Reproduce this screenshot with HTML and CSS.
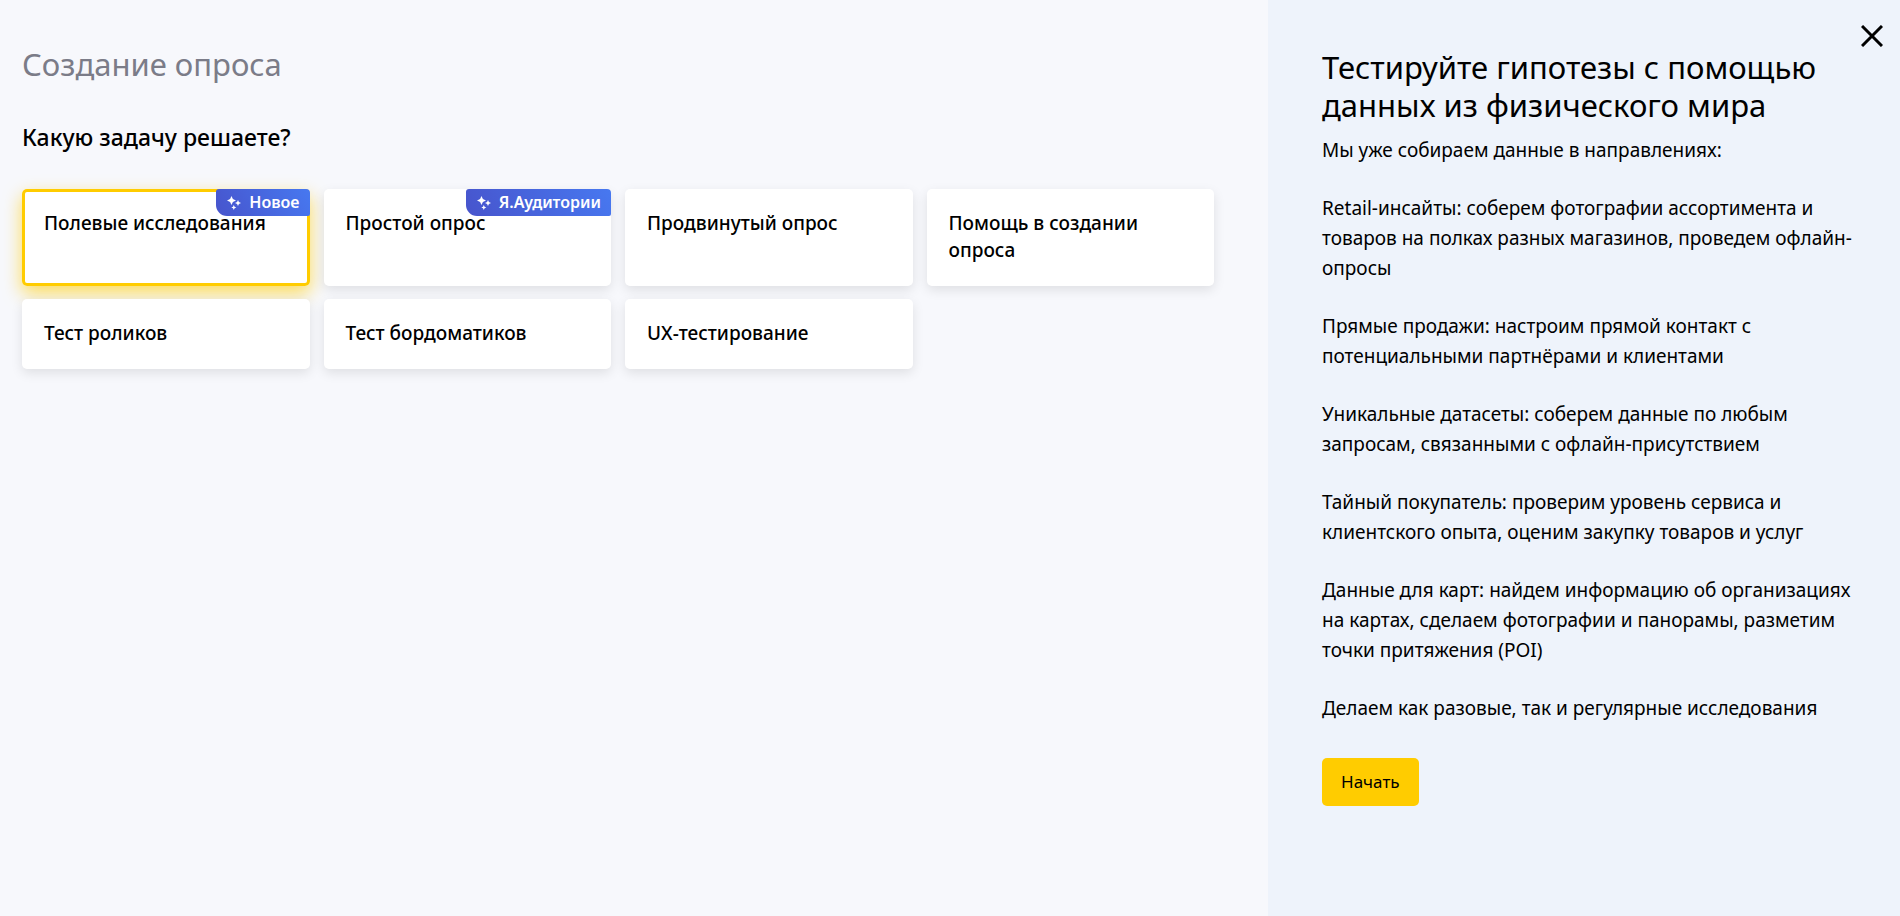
FILE: index.html
```html
<!DOCTYPE html>
<html lang="ru">
<head>
<meta charset="utf-8">
<meta name="viewport" content="width=device-width, initial-scale=1">
<title>Создание опроса</title>
<link rel="stylesheet" href="styles.css">
</head>
<body>
<svg class="sprite" aria-hidden="true">
  <symbol id="sparkles" viewBox="0 0 14 14">
    <path d="M4.500 0 L5.900 3.100 L9 4.500 L5.900 5.900 L4.500 9 L3.100 5.900 L0 4.500 L3.100 3.100Z"/>
    <path d="M11 4 L11.900 6.100 L14 7 L11.900 7.900 L11 10 L10.100 7.900 L8 7 L10.100 6.100Z"/>
    <path d="M6.800 9 L7.600 10.700 L9.300 11.500 L7.600 12.300 L6.800 14 L6 12.300 L4.300 11.500 L6 10.700Z"/>
  </symbol>
</svg>
<div class="page">
  <main class="main">
    <h1 class="title">Создание опроса</h1>
    <h2 class="question">Какую задачу решаете?</h2>
    <div class="cards">
      <button type="button" class="card card--selected">Полевые исследования<span class="badge"><svg class="badge__icon" aria-hidden="true"><use href="#sparkles"/></svg>Новое</span></button>
      <button type="button" class="card">Простой опрос<span class="badge"><svg class="badge__icon" aria-hidden="true"><use href="#sparkles"/></svg>Я.Аудитории</span></button>
      <button type="button" class="card">Продвинутый опрос</button>
      <button type="button" class="card">Помощь в создании опроса</button>
      <button type="button" class="card">Тест роликов</button>
      <button type="button" class="card">Тест бордоматиков</button>
      <button type="button" class="card">UX-тестирование</button>
    </div>
  </main>
  <aside class="panel">
    <button type="button" class="close" aria-label="Закрыть"><svg class="close__icon" viewBox="0 0 22 22" aria-hidden="true"><path d="M1 1 21 21M21 1 1 21"/></svg></button>
    <h2 class="panel__title">Тестируйте гипотезы с помощью данных из физического мира</h2>
    <div class="panel__text">
      <p>Мы уже собираем данные в направлениях:</p>
      <p>Retail-инсайты: соберем фотографии ассортимента и товаров на полках разных магазинов, проведем офлайн-опросы</p>
      <p>Прямые продажи: настроим прямой контакт с потенциальными партнёрами и клиентами</p>
      <p>Уникальные датасеты: соберем данные по любым запросам, связанными с офлайн-присутствием</p>
      <p>Тайный покупатель: проверим уровень сервиса и клиентского опыта, оценим закупку товаров и услуг</p>
      <p>Данные для карт: найдем информацию об организациях на картах, сделаем фотографии и панорамы, разметим точки притяжения (POI)</p>
      <p>Делаем как разовые, так и регулярные исследования</p>
    </div>
    <button type="button" class="start">Начать</button>
  </aside>
</div>
</body>
</html>
```
FILE: styles.css
```css
* { box-sizing: border-box; }

body {
  margin: 0;
  background: #f7f8fc;
  color: #000;
  font-family: "Noto Sans", "Open Sans", sans-serif;
}

h1, h2, p { margin: 0; }

button {
  border: 0;
  color: inherit;
  font-family: inherit;
  cursor: pointer;
}

.sprite {
  position: absolute;
  width: 0;
  height: 0;
}

.page {
  display: grid;
  grid-template-columns: minmax(0, 317fr) minmax(0, 158fr);
  min-height: 100vh;
}

.main { padding: 44px 54px 44px 22px; }

.title {
  color: #7b7c88;
  font-size: 31px;
  font-weight: 400;
  line-height: 40px;
}

.question {
  margin-top: 37px;
  font-size: 23px;
  font-weight: 500;
  line-height: 32px;
}

.cards {
  display: grid;
  grid-template-columns: repeat(4, minmax(0, 1fr));
  gap: 13px 14px;
  margin-top: 36px;
}

.card {
  position: relative;
  display: flex;
  align-items: flex-start;
  padding: 21px 22px 22px;
  border-radius: 5px;
  background: #fff;
  box-shadow: 0 4px 12px rgba(0, 0, 0, 0.1);
  font-size: 19px;
  font-weight: 500;
  line-height: 27px;
  text-align: left;
}

.card--selected {
  box-shadow: inset 0 0 0 3px #fc0, 0 7px 18px rgba(255, 204, 0, 0.65);
}

.badge {
  position: absolute;
  top: 0;
  right: 0;
  display: flex;
  align-items: center;
  gap: 8px;
  padding: 0 10px 0 11px;
  border-radius: 3px 4px 2px 11px;
  background: linear-gradient(60deg, #4754cc, #4778f0);
  color: #fff;
  font-size: 16px;
  font-weight: 600;
  line-height: 27px;
}

.badge__icon {
  width: 14px;
  height: 14px;
  fill: #fff;
}

.panel {
  position: relative;
  padding: 48px 40px 48px 54px;
  background: #eef3fb;
}

.panel__title {
  font-size: 31px;
  font-weight: 400;
  line-height: 38px;
}

.panel__text {
  display: grid;
  gap: 28px;
  margin-top: 11px;
  font-size: 19px;
  line-height: 30px;
}

.close {
  position: absolute;
  top: 25px;
  right: 17px;
  padding: 0;
  background: none;
}

.close__icon {
  display: block;
  width: 22px;
  height: 22px;
  fill: none;
  stroke: #000;
  stroke-width: 3;
}

.start {
  margin-top: 35px;
  padding: 12px 19px;
  border-radius: 5px;
  background: #fc0;
  font-size: 17px;
  line-height: 24px;
}
```
